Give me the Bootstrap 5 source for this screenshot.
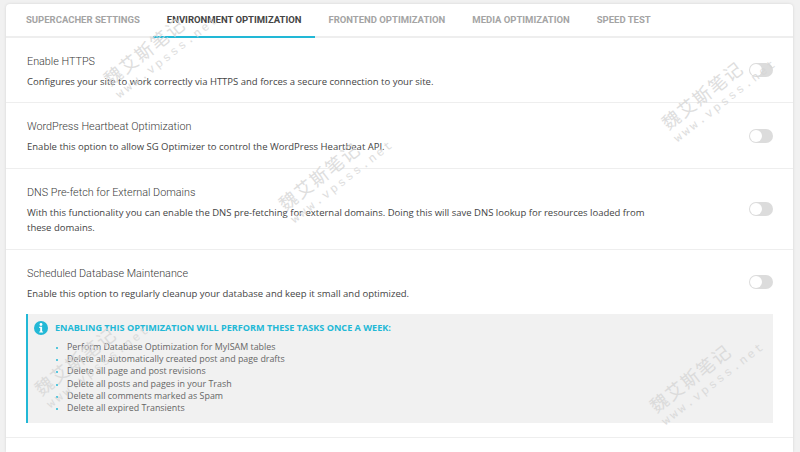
<!DOCTYPE html>
<html lang="en">
<head>
  <meta charset="UTF-8">
  <meta name="viewport" content="width=device-width, initial-scale=1.0">
  <title>Environment Optimization</title>
  <link href="https://cdn.jsdelivr.net/npm/bootstrap@5.3.0/dist/css/bootstrap.min.css" rel="stylesheet">
  <style>
    html, body { height: 452px; overflow: hidden; }
    body { background: #f1f1f1; font-family: "Open Sans", "Liberation Sans", sans-serif; position: relative; }
    .sg-panel { margin: 4px 7px 0 6px; background: #fff; border-radius: 4px 4px 0 0; box-shadow: 0 0 3px rgba(0,0,0,.12); height: 448px; }
    .sg-tabs { height: 32px; padding-left: 6.5px; border-bottom: 2px solid #eee; box-sizing: content-box; }
    .sg-tab { font: 700 9.5px/31px Roboto, "Liberation Sans", sans-serif; color: #a4a4a4; padding: 0 13.5px; height: 32px; white-space: nowrap; }
    .sg-tab.on { color: #444; border-bottom: 2px solid #22b8d6; height: 34px; }
    .sg-row { border-bottom: 1px solid #eee; padding: 0 20px 0 21px; }
    .sg-text { padding-top: 2px; }
    .sg-title { font: 300 10.8px/16px Roboto, "Liberation Sans", sans-serif; color: #3a3a3a; margin: 0 0 4px; }
    .sg-desc { font-size: 9.5px; line-height: 15px; color: #444; margin: 0; }
    .sg-switch { width: 24px; height: 14px; border-radius: 7px; background: #dcdcdc; flex: none; position: relative; }
    .sg-switch::before { content: ""; position: absolute; left: 1px; top: 1px; width: 12px; height: 12px; border-radius: 50%; background: #fff; }
    .sg-note { margin: 0 20px 0 20px; height: 109px; background: #f1f1f1; border-left: 2px solid #22b8d6; padding: 6px 0 0 6px; }
    .sg-note-head { font: 700 9.1px/16px "Open Sans", "Liberation Sans", sans-serif; color: #22b8d6; white-space: nowrap; gap: 7px; }
    .sg-note ul { margin: 5px 0 0; padding-left: 33px; font-size: 8.9px; line-height: 12.2px; color: #666; }
    .sg-note li::marker { color: #22b8d6; font-size: 7px; }
    .sg-spacer { height: 15px; border-bottom: 1px solid #eee; }
    .sg-mark { position: absolute; transform: rotate(-38deg); transform-origin: 0 0; color: #d6d6d6; white-space: nowrap; pointer-events: none; opacity: .8; }
    .sg-mark b { display: block; font: 400 18px/24px "Noto Sans CJK SC", sans-serif; letter-spacing: 1.5px; }
    .sg-mark i { display: block; font: 400 12px/16px "Liberation Mono", monospace; letter-spacing: 2.6px; }
  </style>
</head>
<body>
  <div class="sg-panel">
    <div class="sg-tabs d-flex">
      <div class="sg-tab">SUPERCACHER SETTINGS</div>
      <div class="sg-tab on">ENVIRONMENT OPTIMIZATION</div>
      <div class="sg-tab">FRONTEND OPTIMIZATION</div>
      <div class="sg-tab">MEDIA OPTIMIZATION</div>
      <div class="sg-tab">SPEED TEST</div>
    </div>

    <div class="sg-row d-flex align-items-center justify-content-between" style="height:65px">
      <div class="sg-text">
        <h6 class="sg-title">Enable HTTPS</h6>
        <p class="sg-desc">Configures your site to work correctly via HTTPS and forces a secure connection to your site.</p>
      </div>
      <span class="sg-switch"></span>
    </div>
    <div class="sg-row d-flex align-items-center justify-content-between" style="height:66px">
      <div class="sg-text">
        <h6 class="sg-title">WordPress Heartbeat Optimization</h6>
        <p class="sg-desc">Enable this option to allow SG Optimizer to control the WordPress Heartbeat API.</p>
      </div>
      <span class="sg-switch"></span>
    </div>
    <div class="sg-row d-flex align-items-center justify-content-between" style="height:81px">
      <div class="sg-text" style="width:625px">
        <h6 class="sg-title">DNS Pre-fetch for External Domains</h6>
        <p class="sg-desc">With this functionality you can enable the DNS pre-fetching for external domains. Doing this will save DNS lookup for resources loaded from these domains.</p>
      </div>
      <span class="sg-switch"></span>
    </div>
    <div class="sg-row border-0 d-flex align-items-center justify-content-between" style="height:64px">
      <div class="sg-text">
        <h6 class="sg-title">Scheduled Database Maintenance</h6>
        <p class="sg-desc">Enable this option to regularly cleanup your database and keep it small and optimized.</p>
      </div>
      <span class="sg-switch"></span>
    </div>
    <div class="sg-note">
      <div class="sg-note-head d-flex align-items-center">
        <svg width="14" height="14" viewBox="0 0 14 14"><circle cx="7" cy="7" r="7" fill="#22b8d6"/><circle cx="7" cy="3.5" r="1.4" fill="#fff"/><path d="M5.2 5.8h2.9v4.6h1v1.2H5.2v-1.2h1V7h-1z" fill="#fff"/></svg>
        <span>ENABLING THIS OPTIMIZATION WILL PERFORM THESE TASKS ONCE A WEEK:</span>
      </div>
      <ul>
        <li>Perform Database Optimization for MyISAM tables</li>
        <li>Delete all automatically created post and page drafts</li>
        <li>Delete all page and post revisions</li>
        <li>Delete all posts and pages in your Trash</li>
        <li>Delete all comments marked as Spam</li>
        <li>Delete all expired Transients</li>
      </ul>
    </div>
    <div class="sg-spacer"></div>
  </div>

  <div class="sg-mark" style="left:98px;top:71px"><b>魏艾斯笔记</b><i>www.vpsss.net</i></div>
  <div class="sg-mark" style="left:656px;top:115px"><b>魏艾斯笔记</b><i>www.vpsss.net</i></div>
  <div class="sg-mark" style="left:273px;top:196px"><b>魏艾斯笔记</b><i>www.vpsss.net</i></div>
  <div class="sg-mark" style="left:644px;top:398px"><b>魏艾斯笔记</b><i>www.vpsss.net</i></div>
  <div class="sg-mark" style="left:29px;top:381px"><b>魏艾斯笔记</b><i>www.vpsss.net</i></div>

  <script src="https://cdn.jsdelivr.net/npm/bootstrap@5.3.0/dist/js/bootstrap.bundle.min.js"></script>
</body>
</html>
